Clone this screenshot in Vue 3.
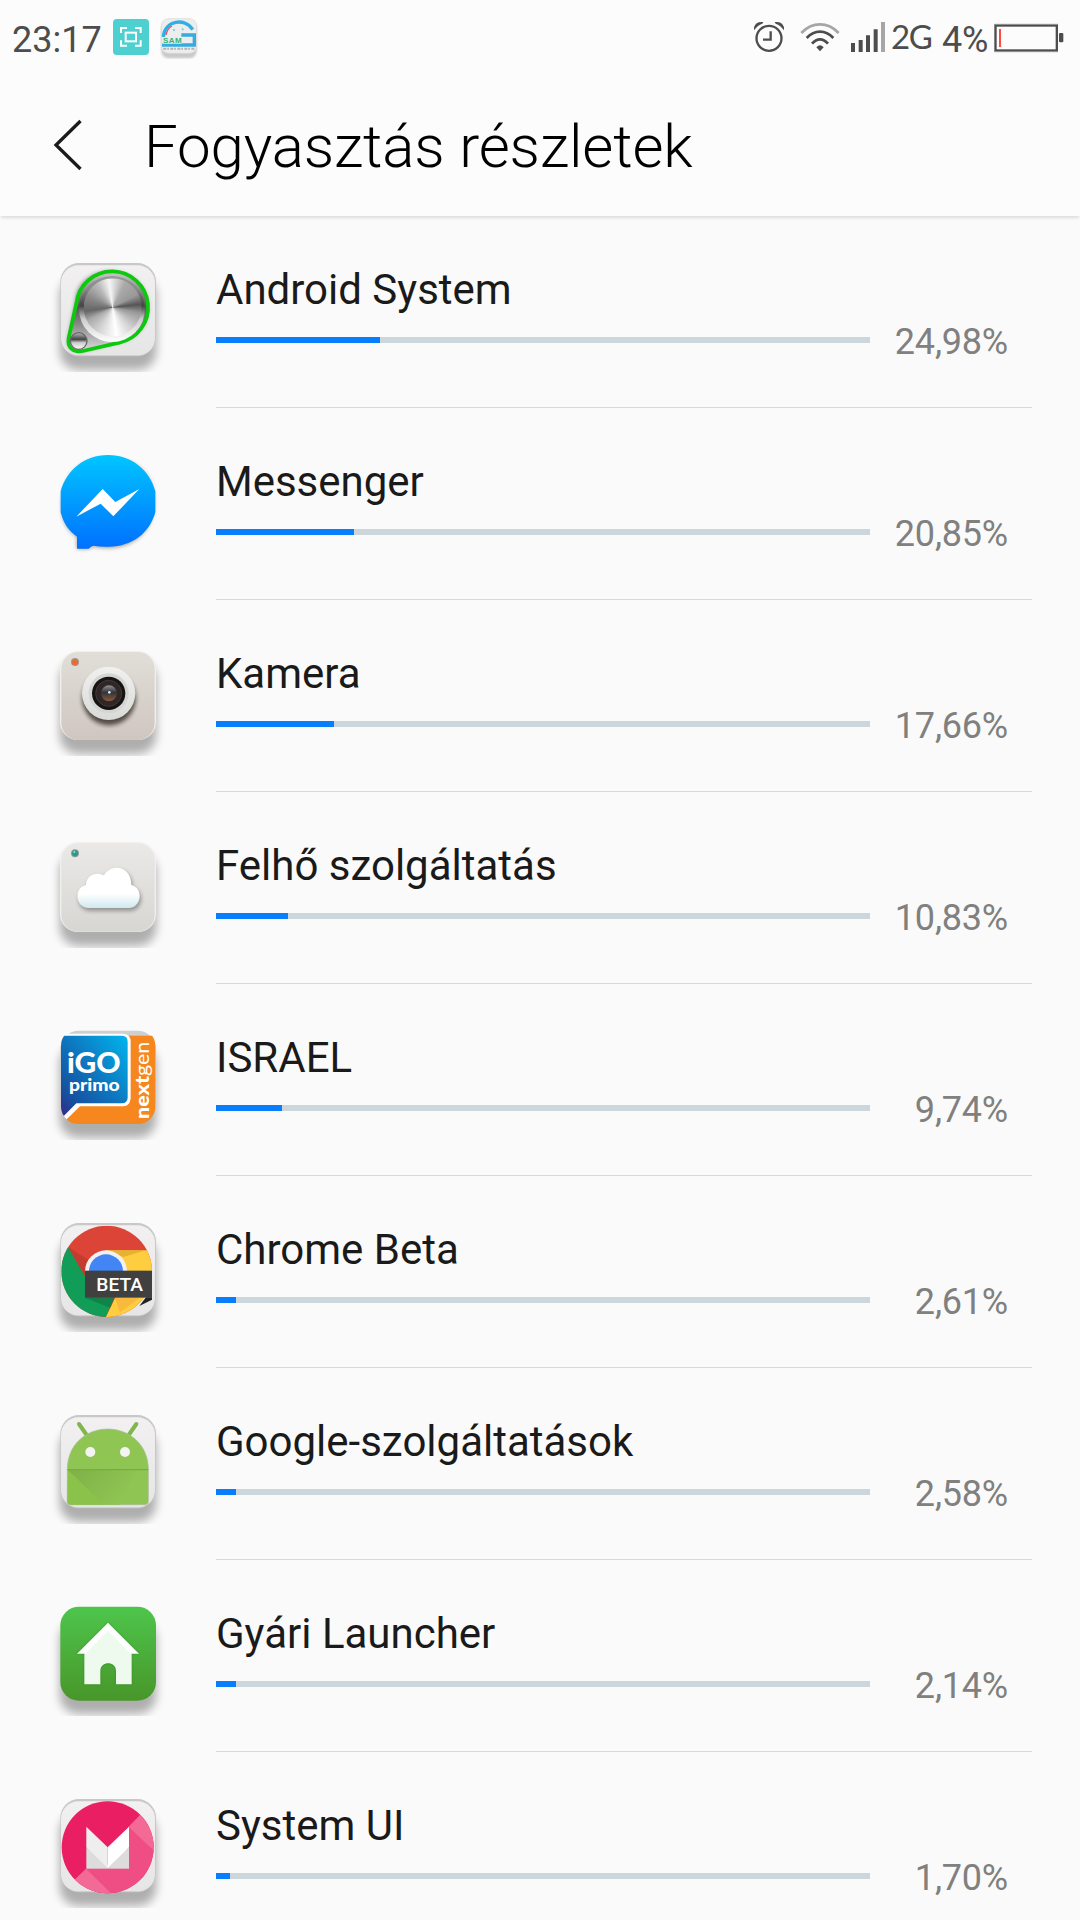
<template>
  <div class="screen">
    <!-- status bar -->
    <div class="status">
      <span class="time">23:17</span>
      <svg class="notif" width="36" height="36" viewBox="0 0 108 108">
        <rect width="108" height="108" rx="11" fill="#4fd0d0" />
        <path d="M24 42V27H42M66 27H83V42M83 64V80H66M42 80H24V64" fill="none" stroke="#fff" stroke-width="6" />
        <rect x="38" y="41" width="31" height="26" fill="none" stroke="#fff" stroke-width="6" />
      </svg>
      <svg class="notif sam" width="38" height="42" viewBox="480 52 114 126">
        <rect x="484" y="66" width="106" height="110" rx="22" fill="#c9c9c9" filter="url(#soft)" />
        <rect x="484" y="57" width="106" height="104" rx="22" fill="#ededed" stroke="#d6d6d6" stroke-width="2" />
        <path d="M490 112C494 60 556 54 578 90" fill="none" stroke="#2fb0e4" stroke-width="10" />
        <path d="M498 106C500 94 506 85 516 79" fill="none" stroke="#e0526a" stroke-width="4" />
        <path d="M544 101H588V141H486V131H578V111H544Z" fill="#36abdf" />
        <path d="M522 88v6M548 86v6" stroke="#7cc8ea" stroke-width="5" />
        <rect x="487" y="112" width="58" height="20" fill="#e4efe9" />
        <text x="489" y="131" class="sam-text" textLength="56">SAM</text>
        <path d="M490 147H586" stroke="#999" stroke-width="6" stroke-dasharray="9 3 5 4" opacity=".7" />
      </svg>
      <div class="status-right">
        <svg class="alarm" width="30" height="36" viewBox="72 54 90 108">
          <circle cx="117" cy="115" r="37.5" fill="none" stroke="#4d4d4d" stroke-width="7" />
          <path d="M122 94V119H99" fill="none" stroke="#4d4d4d" stroke-width="7" />
          <path d="M72 91V82Q77 66 94 66H100L97 71Q82 76 72 91ZM162 91V82Q157 66 140 66H134L137 71Q152 76 162 91Z" fill="#4d4d4d" />
        </svg>
        <svg class="wifi" width="40" height="36" viewBox="210 54 120 108">
          <g fill="none" stroke="#4d4d4d" stroke-width="8">
            <path d="M214 99Q238 73 270 73T326 99" stroke="#a6a6a6" />
            <path d="M230 114Q248 95 270 95T310 114" />
            <path d="M246 131Q257 118 270 118T294 131" />
          </g>
          <path d="M259 142Q270 130 281 142L270 154Z" fill="#4d4d4d" />
        </svg>
        <svg class="signal" width="35" height="36" viewBox="360 54 105 108">
          <path d="M363 129h12v27h-12zM386 120h12v36h-12zM408 106h12v50h-12zM431 88h12v68h-12z" fill="#4d4d4d" />
          <path d="M453 66h12v90h-12z" fill="#a6a6a6" />
        </svg>
        <span class="net">2G</span>
        <span class="percent">4%</span>
        <svg class="battery" width="70" height="36" viewBox="792 54 210 108">
          <rect x="796.5" y="76.5" width="184" height="75" fill="none" stroke="#4d4d4d" stroke-width="7" />
          <path d="M793 73H984M793 155H984" stroke="#929292" stroke-width="3" />
          <rect x="987" y="99" width="13" height="28" rx="3" fill="#4d4d4d" />
          <rect x="807" y="87" width="6" height="54" fill="#ff4a42" />
        </svg>
      </div>
    </div>

    <!-- title bar -->
    <div class="header">
      <svg class="back" width="30" height="54" viewBox="0 0 30 54">
        <path d="M27.5 3L3 27L27.5 51" fill="none" stroke="#1a1a1a" stroke-width="3.3" />
      </svg>
      <h1>Fogyasztás részletek</h1>
    </div>

    <!-- app list -->
    <div class="list">
      <div v-for="app in apps" :key="app.name" class="row">
        <svg class="icon" width="140" height="150" viewBox="0 0 420 450">
          <g v-if="app.icon !== 'messenger'" clip-path="url(#shadowClip)">
            <rect x="59" y="110" width="290" height="280" rx="56" fill="#000" opacity=".3" filter="url(#shadow)" />
          </g>
          <g v-if="app.plate">
            <rect x="61" y="69" width="287" height="280" rx="56" fill="#c8c8c8" />
            <rect x="63" y="76" width="282" height="270" rx="52" fill="url(#plate)" />
          </g>

          <g v-if="app.icon === 'knob'">
            <path d="M107 180C116 66 300 66 322 180C332 244 294 298 230 306L130 333C102 340 81 324 86 292Z" fill="#333" opacity=".55" filter="url(#blur6)" />
            <path d="M109 190A108 108 0 1 1 238 308L128 333C100 339 80 322 86 294Z" fill="url(#metal)" stroke="#0bc90b" stroke-width="11" stroke-linejoin="round" />
            <foreignObject x="117" y="108" width="198" height="198">
              <div class="knob-rim"></div>
            </foreignObject>
            <foreignObject x="131" y="115" width="174" height="174">
              <div class="knob"></div>
            </foreignObject>
            <circle cx="116" cy="303" r="25" fill="url(#ball)" stroke="#666" stroke-width="4" />
          </g>

          <g v-else-if="app.icon === 'messenger'" transform="translate(0 24)">
            <path d="M66 200C66 104 120 56 204 56S342 100 342 186C342 264 290 323 204 323Q178 324 158 319L144 326H111V290C78 266 66 238 66 200Z" fill="#000" opacity=".4" filter="url(#blur6)" />
            <path d="M62 154C79 92 132 45 204 45S330 92 346 154V217C329 278 278 320 206 320Q182 321 160 317Q153 319 146 326H111V290C85 272 70 249 62 217Z" fill="url(#msg)" />
            <path d="M109 230L188 147L226 186L298 147L220 229L182 191Z" fill="#fff" />
          </g>

          <g v-else-if="app.icon === 'camera'" transform="translate(0 18)">
            <rect x="60" y="63" width="288" height="267" rx="54" fill="#f2f0ed" />
            <rect x="64" y="66" width="280" height="264" rx="51" fill="url(#cam)" />
            <circle cx="105" cy="96" r="12" fill="#9c9a94" />
            <circle cx="105" cy="97" r="9" fill="#ea6a30" />
            <circle cx="207" cy="206" r="80" fill="#1d1510" opacity=".7" filter="url(#blur6)" />
            <circle cx="206" cy="190" r="80" fill="url(#ring)" />
            <circle cx="206" cy="190" r="60" fill="#d5d6d2" />
            <circle cx="206" cy="190" r="50" fill="#171514" />
            <circle cx="206" cy="190" r="39" fill="#302626" stroke="#443a3a" stroke-width="3" />
            <circle cx="207" cy="190" r="24" fill="url(#lens)" />
            <circle cx="208" cy="187" r="4" fill="#dfe6ea" />
          </g>

          <g v-else-if="app.icon === 'cloud'" transform="translate(0 27)">
            <rect x="60" y="51" width="288" height="270" rx="54" fill="#f1f0ef" />
            <rect x="64" y="55" width="280" height="265" rx="51" fill="url(#cloudBg)" />
            <circle cx="105" cy="85" r="12" fill="#8d9b97" />
            <circle cx="105" cy="85" r="9" fill="#2a9a8b" />
            <circle cx="103" cy="81" r="3" fill="#8ee6da" />
            <path :d="cloudPath" transform="translate(4 8)" fill="#000" opacity=".35" filter="url(#blur6)" />
            <path :d="cloudPath" fill="url(#cloud)" />
          </g>

          <g v-else-if="app.icon === 'igo'" transform="translate(0 21)">
            <rect x="61" y="47" width="287" height="270" rx="56" fill="#cfcfcf" />
            <g clip-path="url(#igoClip)">
              <rect x="61" y="62" width="287" height="266" fill="#f6871f" />
              <path d="M61 56H250Q272 58 272 80V250Q270 273 250 274H120L77 316H61Z" fill="#fff" />
              <path d="M61 62H246Q263 62 263 80V248Q262 264 246 265H109L72 302L61 300Z" fill="url(#igo)" />
            </g>
            <text class="igo-text">
              <tspan x="81" y="175" class="igo-big" textLength="161" lengthAdjust="spacingAndGlyphs">iGO</tspan>
              <tspan x="87" y="228" class="igo-small" textLength="152" lengthAdjust="spacingAndGlyphs">primo</tspan>
            </text>
            <text transform="translate(327 312) rotate(-90)" class="igo-next" textLength="232" lengthAdjust="spacingAndGlyphs"><tspan class="heavy">next</tspan>gen</text>
          </g>

          <g v-else-if="app.icon === 'chrome'" transform="translate(0 15)">
            <g clip-path="url(#chromeClip)">
              <rect x="60" y="60" width="290" height="278" fill="#db4437" />
              <path d="M84 126L135 214L165 280H220L196 340H60V126Z" fill="#119d58" />
              <path d="M198 136H350V340H196L226 277Z" fill="#ffcd40" />
              <path d="M198 136H318L250 156Z" fill="#dda62b" opacity=".7" />
              <path d="M84 126L150 168L135 214Z" fill="#a93026" opacity=".45" />
              <path d="M135 278H224L211 308Z" fill="#0b6f3c" opacity=".55" />
              <path d="M225 278H300L240 322Z" fill="#f2ae3a" opacity=".6" />
            </g>
            <path d="M318 277H336V284L298 303Z" fill="#222" />
            <circle cx="198" cy="199" r="63" fill="#f1f1f1" />
            <circle cx="198" cy="199" r="51" fill="#4285f4" />
            <rect x="135" y="197" width="201" height="81" fill="#404040" />
            <text x="169" y="257" class="beta" textLength="140" lengthAdjust="spacingAndGlyphs">BETA</text>
          </g>

          <g v-else-if="app.icon === 'android'" transform="translate(0 24)">
            <path d="M117 72L142 108M289 72L264 108" stroke="#80b64c" stroke-width="12" stroke-linecap="round" />
            <path d="M82 208C82 136 136 87 203 87S325 136 325 208V304Q325 314 315 314H92Q82 314 82 304Z" fill="#8fc653" stroke="#a9b99a" stroke-width="2" />
            <path d="M84 210L190 314H92Q82 314 82 304Z" fill="#8bc34a" />
            <path d="M84 210H290L240 314H190Z" fill="url(#droidShade)" />
            <path d="M82 209H325" stroke="#78ab44" stroke-width="4" />
            <circle cx="151" cy="156" r="15" fill="#f4f4f4" />
            <circle cx="255" cy="156" r="15" fill="#f4f4f4" />
          </g>

          <g v-else-if="app.icon === 'home'" transform="translate(0 18)">
            <rect x="61" y="50" width="287" height="282" rx="56" fill="url(#home)" />
            <path d="M204 98L297 191H275V283H228V243C228 212 181 212 181 243V283H133V191H111Z" fill="#165b10" opacity=".35" filter="url(#blur3)" />
            <path d="M133 175L204 108L275 175V283H228V243C228 212 181 212 181 243V283H133Z" fill="#eefaee" />
            <path d="M204 98L297 191H272L204 122L136 191H111Z" fill="#fff" />
          </g>

          <g v-else-if="app.icon === 'marsh'" transform="translate(0 27)">
            <g clip-path="url(#marshClip)">
              <rect x="60" y="44" width="290" height="284" fill="#e91e63" />
              <path d="M304 86L360 140V340H50L106 282L138 251H266V125Z" fill="#ef4e85" />
              <path d="M304 86L360 140V214L266 125ZM138 251L100 288L140 330H218Z" fill="#f36a97" />
            </g>
            <path d="M139 187V251H267V187L203 240Z" fill="#dcdcdc" />
            <path d="M139 125L203 187V249L139 187Z" fill="#eee" />
            <path d="M267 125L203 187V249L267 187Z" fill="#fff" />
          </g>
        </svg>

        <div class="content">
          <div class="name">{{ app.name }}</div>
          <div class="usage">
            <div class="track">
              <div class="fill" :style="{ width: barWidth(app.value) }"></div>
            </div>
            <div class="value">{{ format(app.value) }}</div>
          </div>
        </div>
      </div>
    </div>

    <!-- shared gradients and filters -->
    <svg class="defs" width="0" height="0">
      <defs>
        <filter id="soft"><feGaussianBlur stdDeviation="3" /></filter>
        <filter id="blur3" x="-20%" y="-20%" width="140%" height="140%"><feGaussianBlur stdDeviation="3" /></filter>
        <filter id="blur6" x="-20%" y="-20%" width="140%" height="140%"><feGaussianBlur stdDeviation="6" /></filter>
        <filter id="shadow" x="-20%" y="-20%" width="140%" height="140%"><feGaussianBlur stdDeviation="14" /></filter>
        <clipPath id="shadowClip"><rect x="30" y="60" width="350" height="336" /></clipPath>
        <clipPath id="igoClip"><rect x="63" y="40" width="283" height="287" rx="52" /></clipPath>
        <clipPath id="chromeClip"><path d="M64 199A136 137 0 0 1 336 199A136 137 0 0 1 64 199Z" /></clipPath>
        <clipPath id="marshClip"><circle cx="203" cy="187" r="138" /></clipPath>
        <linearGradient id="plate" x2="0" y2="1"><stop stop-color="#f2f0f0" /><stop offset="1" stop-color="#e6e6e6" /></linearGradient>
        <linearGradient id="metal" x2="0" y2="1"><stop stop-color="#ccc" /><stop offset=".45" stop-color="#555" /><stop offset="1" stop-color="#ddd" /></linearGradient>
        <linearGradient id="ball" x2="0" y2="1"><stop stop-color="#bbb" /><stop offset=".4" stop-color="#444" /><stop offset=".6" stop-color="#ccc" /><stop offset="1" stop-color="#fff" /></linearGradient>
        <linearGradient id="msg" x2="0" y2="1"><stop stop-color="#00c6ff" /><stop offset="1" stop-color="#0070ff" /></linearGradient>
        <linearGradient id="cam" x2="0" y2="1"><stop stop-color="#e1ded8" /><stop offset="1" stop-color="#cfc6c0" /></linearGradient>
        <linearGradient id="ring" x2="0" y2="1"><stop stop-color="#f0f1ee" /><stop offset="1" stop-color="#d9dbd8" /></linearGradient>
        <linearGradient id="lens" x2="0" y2="1"><stop stop-color="#8e9092" /><stop offset=".45" stop-color="#33343a" /><stop offset="1" stop-color="#8a5a3c" /></linearGradient>
        <linearGradient id="cloudBg" x2="0" y2="1"><stop stop-color="#eae9e7" /><stop offset="1" stop-color="#d8d6d2" /></linearGradient>
        <linearGradient id="cloud" x2="0" y2="1"><stop offset=".65" stop-color="#fff" /><stop offset="1" stop-color="#cfe9ef" /></linearGradient>
        <linearGradient id="igo" x1="1" x2="0" y2="1"><stop stop-color="#00b5ee" /><stop offset=".5" stop-color="#0e74bd" /><stop offset=".8" stop-color="#1652a0" /><stop offset="1" stop-color="#342a86" /></linearGradient>
        <linearGradient id="droidShade" x2="1" y2=".4"><stop stop-color="#7fb047" /><stop offset="1" stop-color="#8fc653" /></linearGradient>
        <linearGradient id="home" x2="0" y2="1"><stop stop-color="#4ec54c" /><stop offset="1" stop-color="#48962a" /></linearGradient>
      </defs>
    </svg>
  </div>
</template>

<script setup>
import { ref } from 'vue'

const apps = ref([
  { name: 'Android System', value: 24.98, icon: 'knob', plate: true },
  { name: 'Messenger', value: 20.85, icon: 'messenger' },
  { name: 'Kamera', value: 17.66, icon: 'camera' },
  { name: 'Felhő szolgáltatás', value: 10.83, icon: 'cloud' },
  { name: 'ISRAEL', value: 9.74, icon: 'igo' },
  { name: 'Chrome Beta', value: 2.61, icon: 'chrome', plate: true },
  { name: 'Google-szolgáltatások', value: 2.58, icon: 'android', plate: true },
  { name: 'Gyári Launcher', value: 2.14, icon: 'home' },
  { name: 'System UI', value: 1.7, icon: 'marsh', plate: true }
])

const cloudPath = 'M146 249C105 249 101 187 138 180C138 151 168 138 192 151C214 113 274 122 274 180C312 190 305 249 266 249Z'

const trackWidth = 654

// the bar moves in whole percents and ends on a whole pixel
const barWidth = (value) => `${Math.ceil((Math.ceil(value) * trackWidth) / 100)}px`

// Hungarian decimal comma
const format = (value) => `${value.toFixed(2).replace('.', ',')}%`
</script>

<style>
body {
  background: #fafafa;
}
</style>

<style scoped>
.screen {
  width: 1080px;
  height: 1920px;
  overflow: hidden;
  background: #fafafa;
  font-family: Roboto, 'Noto Sans', sans-serif;
}

.status {
  display: flex;
  align-items: flex-start;
  height: 72px;
  padding: 0 16px 0 12px;
  box-sizing: border-box;
  background: #fcfcfc;
  color: #4d4d4d;
  font-size: 36px;
  line-height: 42px;
}

.time {
  width: 101px;
  padding-top: 19px;
}

.notif {
  margin-top: 19px;
}

.sam {
  margin: 17px 0 0 11px;
}

.status-right {
  display: flex;
  margin-left: auto;
}

.status-right svg {
  margin-top: 18px;
}

.wifi {
  margin-left: 16px;
}

.signal {
  margin-left: 10px;
}

.net {
  flex: none;
  width: 51px;
  padding: 15px 0 0 6px;
  font-family: Lato, sans-serif;
  font-size: 33px;
  letter-spacing: -1.5px;
}

.percent {
  flex: none;
  width: 52px;
  padding-top: 19px;
  letter-spacing: -0.3px;
}

.header {
  display: flex;
  align-items: flex-start;
  height: 144px;
  box-sizing: border-box;
  padding-left: 53px;
  background: #fcfcfc;
  box-shadow: 0 3px 3px -1px rgba(0, 0, 0, 0.12);
}

.back {
  margin-top: 46px;
}

h1 {
  margin: 39px 0 0 61px;
  font-size: 60px;
  font-weight: 300;
  line-height: 72px;
  letter-spacing: -0.12px;
  color: #000;
}

.row {
  display: flex;
  height: 192px;
  padding: 0 48px 0 40px;
}

.icon {
  flex: none;
  margin: 24px 36px 0 0;
}

.content {
  flex: 1;
  box-sizing: border-box;
  padding: 49px 24px 0 0;
  border-bottom: 1px solid #d9d9d9;
}

.name {
  font-size: 42px;
  line-height: 50px;
  color: #1a1a1a;
}

.usage {
  display: flex;
  align-items: center;
  height: 46px;
  margin-top: 2px;
}

.track {
  width: 654px;
  height: 6px;
  background: #cdd6db;
}

.fill {
  height: 100%;
  background: #087eff;
}

.value {
  flex: 1;
  padding-top: 4px;
  font-size: 36px;
  line-height: 42px;
  letter-spacing: -0.2px;
  text-align: right;
  color: #808080;
}

.knob,
.knob-rim {
  width: 100%;
  height: 100%;
  border-radius: 50%;
}

.knob {
  background: conic-gradient(from -8deg, #f5f5f5, #aaa 35deg, #999 70deg, #555 92deg, #999 110deg, #d0d0d0 145deg, #fff 180deg, #d8d8d8 215deg, #aaa 250deg, #666 270deg, #888 300deg, #bbb 335deg, #f5f5f5);
}

.knob-rim {
  background: linear-gradient(#999, #888 20%, #444 45%, #ccc 65%, #fff);
}

.sam-text {
  font: bold 24px 'Liberation Sans', sans-serif;
  fill: #35b07a;
}

.igo-text {
  font-family: Lato, sans-serif;
  font-weight: 900;
  fill: #fff;
}

.igo-big {
  font-size: 84px;
}

.igo-small {
  font-size: 50px;
}

.igo-next {
  font: 56px Lato, sans-serif;
  fill: #fff;
}

.heavy {
  font-weight: 900;
}

.beta {
  font: 500 56px Roboto, sans-serif;
  fill: #fff;
}

.defs {
  display: block;
}
</style>
